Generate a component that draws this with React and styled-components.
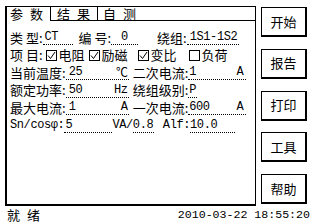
import React from 'react';
import styled, { createGlobalStyle } from 'styled-components';

const GlobalStyle = createGlobalStyle`
  html, body {
    margin: 0;
    padding: 0;
    background: #fff;
  }
  body {
    font-family: "Noto Sans CJK SC", "Liberation Sans", sans-serif;
    font-size: 13px;
    color: #000;
  }
`;

const mono = `
  font-family: "Liberation Mono", "Noto Sans CJK SC", monospace;
  font-size: 12px;
  letter-spacing: -0.4px;
`;

const Screen = styled.div`
  width: 312px;
  height: 224px;
  box-sizing: border-box;
  padding: 6px 0 0 5px;
  display: flex;
  flex-direction: column;
  overflow: hidden;
`;

const Top = styled.div`
  display: flex;
  height: 200px;
`;

const Panel = styled.div`
  width: 251px;
  height: 200px;
  box-sizing: border-box;
  border-style: solid;
  border-color: #000;
  border-width: 1px 1px 2px 2px;
  display: flex;
  flex-direction: column;
`;

const TabBar = styled.div`
  display: flex;
  height: 14px;
`;

const Tab = styled.div`
  width: ${p => p.w}px;
  box-sizing: border-box;
  height: 14px;
  padding-left: ${p => p.pl}px;
  border-right: ${p => (p.last ? 'none' : '1px solid #000')};
  border-bottom: ${p => (p.active ? 'none' : '1px solid #000')};
  line-height: 13px;
  letter-spacing: 7px;
  white-space: nowrap;
`;

const TabFill = styled.div`
  flex: 1;
  border-bottom: 1px solid #000;
`;

const Form = styled.div`
  padding: 8px 0 0 3px;
  display: flex;
  flex-direction: column;
`;

const Row = styled.div`
  display: flex;
  align-items: center;
  height: 17.5px;
  white-space: nowrap;
`;

const Label = styled.span`
  margin-left: ${p => p.ml || 0}px;
  line-height: 14px;
  ${p => (p.latin ? mono : '')}
`;

const Field = styled.span`
  display: flex;
  justify-content: space-between;
  width: ${p => p.w}px;
  box-sizing: border-box;
  padding-left: ${p => p.pl || 0}px;
  padding-right: ${p => p.pr || 0}px;
  border-bottom: 1px dotted #000;
  line-height: 14px;
  ${mono}
`;

const Unit = styled.span`
  ${p => (p.cjk ? 'font-family: "Noto Sans CJK SC", sans-serif; font-size: 12px;' : '')}
`;

const Plain = styled.span`
  line-height: 14px;
  ${mono}
`;

const CheckItem = styled.span`
  display: flex;
  align-items: center;
  gap: 2px;
  margin-left: ${p => p.ml}px;
  line-height: 14px;
`;

const Buttons = styled.div`
  margin-left: 5px;
  padding-top: 1px;
  display: flex;
  flex-direction: column;
  gap: 11.75px;
`;

const Button = styled.button`
  width: 46px;
  height: 30px;
  box-sizing: border-box;
  padding: 0;
  background: #fff;
  color: #000;
  border-style: solid;
  border-color: #000;
  border-width: 1px 2px 2px 1px;
  font-family: "Noto Sans CJK SC", sans-serif;
  font-size: 13px;
  line-height: 14px;
`;

const StatusBar = styled.div`
  flex: 1;
  display: flex;
  align-items: center;
  justify-content: space-between;
  padding: 0 2px 0 2px;
`;

const Status = styled.span`
  letter-spacing: 7px;
  line-height: 14px;
`;

const Clock = styled.span`
  font-family: "Liberation Mono", monospace;
  font-size: 11.6px;
  line-height: 14px;
`;

const Box = ({ checked }) => (
  <svg width="11" height="11" viewBox="0 0 11 11">
    <rect x="0.5" y="0.5" width="10" height="10" fill="none" stroke="#000" />
    {checked && <path d="M2 5.5 L4.5 8.5 L9 2" fill="none" stroke="#000" />}
  </svg>
);

const checks = [
  { text: '电阻', on: true, ml: 3 },
  { text: '励磁', on: true, ml: 4 },
  { text: '变比', on: true, ml: 10 },
  { text: '负荷', on: false, ml: 12 },
];

const buttons = ['开始', '报告', '打印', '工具', '帮助'];

export default function App() {
  return (
    <>
      <GlobalStyle />
      <Screen>
        <Top>
          <Panel>
            <TabBar>
              <Tab w={44} pl={3} active>参数</Tab>
              <Tab w={47} pl={6}>结果</Tab>
              <Tab w={47} pl={5} last>自测</Tab>
              <TabFill />
            </TabBar>
            <Form>
              <Row>
                <Label>类 型:</Label>
                <Field w={30} pl={2}>CT</Field>
                <Label ml={6}>编 号:</Label>
                <Field w={27} pl={10}>0</Field>
                <Label ml={19}>绕组:</Label>
                <Field w={52} pl={3}>1S1-1S2</Field>
              </Row>
              <Row>
                <Label>项 目:</Label>
                {checks.map(c => (
                  <CheckItem key={c.text} ml={c.ml}>
                    <Box checked={c.on} />
                    {c.text}
                  </CheckItem>
                ))}
              </Row>
              <Row>
                <Label>当前温度:</Label>
                <Field w={63} pl={3} pr={1}>25<Unit cjk>℃</Unit></Field>
                <Label ml={4}>二次电流:</Label>
                <Field w={58} pl={1} pr={3}>1<Unit>A</Unit></Field>
              </Row>
              <Row>
                <Label>额定功率:</Label>
                <Field w={63} pl={3} pr={1}>50<Unit>Hz</Unit></Field>
                <Label ml={4}>绕组级别:</Label>
                <Field w={9} pl={1}>P</Field>
              </Row>
              <Row>
                <Label>最大电流:</Label>
                <Field w={63} pl={3} pr={1}>1<Unit>A</Unit></Field>
                <Label ml={4}>一次电流:</Label>
                <Field w={58} pl={1} pr={3}>600<Unit>A</Unit></Field>
              </Row>
              <Row>
                <Label latin>Sn/cosφ:</Label>
                <Field w={48} pl={1}>5</Field>
                <Plain>VA/</Plain>
                <Field w={21}>0.8</Field>
                <Label latin ml={9}>Alf:</Label>
                <Field w={45}>10.0</Field>
              </Row>
            </Form>
          </Panel>
          <Buttons>
            {buttons.map(b => (
              <Button key={b}>{b}</Button>
            ))}
          </Buttons>
        </Top>
        <StatusBar>
          <Status>就绪</Status>
          <Clock>2010-03-22 18:55:20</Clock>
        </StatusBar>
      </Screen>
    </>
  );
}
